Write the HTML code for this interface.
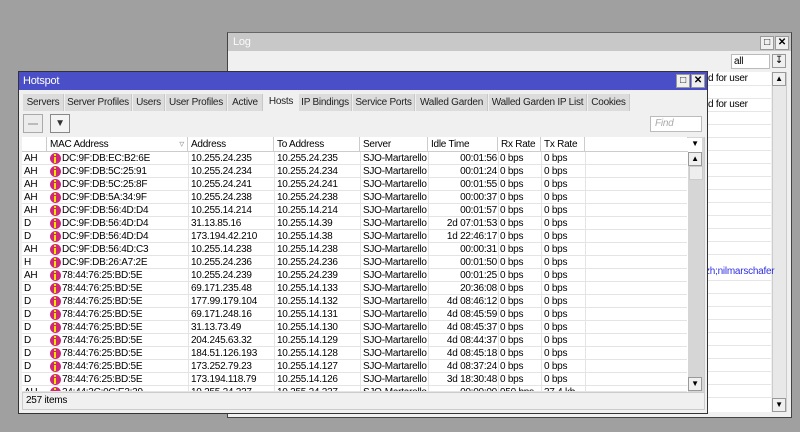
<!DOCTYPE html>
<html><head><meta charset="utf-8"><style>
*{box-sizing:border-box;margin:0;padding:0}
body{width:800px;height:432px;background:#a0a0a0;position:relative;overflow:hidden;font-family:"Liberation Sans",sans-serif;font-size:10px;letter-spacing:-0.25px;color:#000;white-space:nowrap}
.a{position:absolute}
.btn{position:absolute;width:14px;height:14px;border:1px solid #999;background:#f0f0f0;font-size:10px;line-height:12px;text-align:center}
.row{position:absolute;left:22px;width:665px;height:13px;border-bottom:1px solid #e4e4e4;background:#fff;white-space:nowrap}
.row span{position:absolute;top:0;line-height:13px}
.ic{position:absolute;left:28px;top:1px;width:11px;height:11px;border-radius:50%;background:#d02878}
.ic:after{content:"";position:absolute;left:4px;top:4px;width:2px;height:6px;background:#f4e400}
.ic:before{content:"";position:absolute;left:4px;top:1px;width:2px;height:2px;background:#f4e400}
.tab{position:absolute;top:94px;height:17px;background:#dcdcdc;border-right:1px solid #c8c8c8;line-height:17px;text-align:center;color:#222;overflow:hidden}
.hd{position:absolute;top:137px;height:15px;line-height:15px;border-right:1px solid #ccc;padding-left:3px;background:#fff}
.lr{position:absolute;left:707px;width:64px;height:1px;background:#e6e6e6}
</style></head><body>
<div class="a" style="left:227px;top:32px;width:565px;height:386px;background:#f0f0f0;border:1px solid #444;border-top-color:#666"></div>
<div class="a" style="left:228px;top:33px;width:563px;height:18px;background:#c8c8c8;color:#fafafa;padding-left:5px;line-height:18px;font-size:11px">Log</div>
<div class="btn" style="left:760px;top:36px;">&#9633;</div>
<div class="btn" style="left:775px;top:36px;font-weight:bold">✕</div>
<div class="a" style="left:731px;top:54px;width:39px;height:15px;background:#fff;border:1px solid #bbb;padding-left:2px;line-height:13px">all</div>
<div class="btn" style="left:772px;top:54px;">&#8615;</div>
<div class="a" style="left:707px;top:72px;width:64px;height:340px;background:#fff"></div>
<div class="a" style="left:772px;top:72px;width:15px;height:340px;background:#e8e8e8;border:1px solid #ccc"></div>
<div class="btn" style="left:772px;top:72px;font-size:8px">&#9650;</div>
<div class="btn" style="left:772px;top:398px;font-size:8px">&#9660;</div>
<div class="a" style="left:708px;top:72px;line-height:13px">d for user</div>
<div class="a" style="left:708px;top:98px;line-height:13px">d for user</div>
<div class="a" style="left:705px;top:265px;line-height:13px;color:#3030e0">zh;nilmarschafer</div>
<div class="lr" style="top:85px"></div><div class="lr" style="top:98px"></div><div class="lr" style="top:111px"></div><div class="lr" style="top:124px"></div><div class="lr" style="top:137px"></div><div class="lr" style="top:150px"></div><div class="lr" style="top:163px"></div><div class="lr" style="top:176px"></div><div class="lr" style="top:189px"></div><div class="lr" style="top:202px"></div><div class="lr" style="top:215px"></div><div class="lr" style="top:228px"></div><div class="lr" style="top:241px"></div><div class="lr" style="top:254px"></div><div class="lr" style="top:280px"></div><div class="lr" style="top:293px"></div><div class="lr" style="top:306px"></div><div class="lr" style="top:319px"></div><div class="lr" style="top:332px"></div><div class="lr" style="top:345px"></div><div class="lr" style="top:358px"></div><div class="lr" style="top:371px"></div><div class="lr" style="top:384px"></div><div class="lr" style="top:397px"></div>

<div class="a" style="left:18px;top:71px;width:690px;height:343px;background:#f0f0f0;border:1px solid #333"></div>
<div class="a" style="left:19px;top:72px;width:688px;height:18px;background:#4a4fc8;color:#fff;padding-left:4px;line-height:18px;font-size:11px">Hotspot</div>
<div class="btn" style="left:676px;top:74px;">&#9633;</div>
<div class="btn" style="left:691px;top:74px;font-weight:bold">✕</div>
<div class="tab" style="left:23px;width:41px">Servers</div>
<div class="tab" style="left:65px;width:67px">Server Profiles</div>
<div class="tab" style="left:133px;width:32px">Users</div>
<div class="tab" style="left:166px;width:61px">User Profiles</div>
<div class="tab" style="left:228px;width:35px">Active</div>
<div class="tab" style="left:264px;width:34px;top:91px;height:21px;background:#f0f0f0;border:none;line-height:21px">Hosts</div>
<div class="tab" style="left:299px;width:53px">IP Bindings</div>
<div class="tab" style="left:353px;width:62px">Service Ports</div>
<div class="tab" style="left:416px;width:72px">Walled Garden</div>
<div class="tab" style="left:489px;width:98px">Walled Garden IP List</div>
<div class="tab" style="left:588px;width:42px">Cookies</div>
<div class="a" style="left:23px;top:114px;width:20px;height:19px;border:1px solid #aaa;background:#ececec"><div class="a" style="left:4px;top:8px;width:10px;height:2px;background:#bbb"></div></div>
<div class="a" style="left:50px;top:114px;width:20px;height:19px;border:1px solid #888;background:#f4f4f4;text-align:center;line-height:17px;font-weight:bold;color:#333">▼</div>
<div class="a" style="left:650px;top:116px;width:52px;height:16px;background:#fff;border:1px solid #bbb;color:#aaa;padding-left:4px;line-height:14px;font-style:italic">Find</div>
<div class="a" style="left:22px;top:137px;width:683px;height:256px;background:#fff;border:1px solid #ccc"></div>
<div class="hd" style="left:22px;width:25px"></div>
<div class="hd" style="left:47px;width:141px">MAC Address<span style="position:absolute;right:3px;color:#999">▿</span></div>
<div class="hd" style="left:188px;width:86px">Address</div>
<div class="hd" style="left:274px;width:86px">To Address</div>
<div class="hd" style="left:360px;width:68px">Server</div>
<div class="hd" style="left:428px;width:70px">Idle Time</div>
<div class="hd" style="left:498px;width:43px">Rx Rate</div>
<div class="hd" style="left:541px;width:44px">Tx Rate</div>
<div class="hd" style="left:585px;width:102px;border-right:none"></div>
<div class="a" style="left:22px;top:151px;width:683px;height:1px;background:#ccc"></div>
<div class="a" style="left:688px;top:137px;width:16px;height:255px;background:#d6d6d6"></div>
<div class="btn" style="left:688px;top:138px;border:none;background:#fff;font-size:8px">&#9660;</div>
<div class="btn" style="left:688px;top:152px;font-size:8px">&#9650;</div>
<div class="a" style="left:689px;top:166px;width:14px;height:14px;background:#eee;border:1px solid #ccc"></div>
<div class="btn" style="left:688px;top:377px;font-size:8px">&#9660;</div>
<div id="rows"></div>
<div class="a" style="left:22px;top:392px;width:683px;height:18px;border:1px solid #ccc;background:#f0f0f0;padding-left:3px;line-height:16px">257 items</div>
<script>
var d=[["AH","DC:9F:DB:EC:B2:6E","10.255.24.235","10.255.24.235","00:01:56"],["AH","DC:9F:DB:5C:25:91","10.255.24.234","10.255.24.234","00:01:24"],["AH","DC:9F:DB:5C:25:8F","10.255.24.241","10.255.24.241","00:01:55"],["AH","DC:9F:DB:5A:34:9F","10.255.24.238","10.255.24.238","00:00:37"],["AH","DC:9F:DB:56:4D:D4","10.255.14.214","10.255.14.214","00:01:57"],["D","DC:9F:DB:56:4D:D4","31.13.85.16","10.255.14.39","2d 07:01:53"],["D","DC:9F:DB:56:4D:D4","173.194.42.210","10.255.14.38","1d 22:46:17"],["AH","DC:9F:DB:56:4D:C3","10.255.14.238","10.255.14.238","00:00:31"],["H","DC:9F:DB:26:A7:2E","10.255.24.236","10.255.24.236","00:01:50"],["AH","78:44:76:25:BD:5E","10.255.24.239","10.255.24.239","00:01:25"],["D","78:44:76:25:BD:5E","69.171.235.48","10.255.14.133","20:36:08"],["D","78:44:76:25:BD:5E","177.99.179.104","10.255.14.132","4d 08:46:12"],["D","78:44:76:25:BD:5E","69.171.248.16","10.255.14.131","4d 08:45:59"],["D","78:44:76:25:BD:5E","31.13.73.49","10.255.14.130","4d 08:45:37"],["D","78:44:76:25:BD:5E","204.245.63.32","10.255.14.129","4d 08:44:37"],["D","78:44:76:25:BD:5E","184.51.126.193","10.255.14.128","4d 08:45:18"],["D","78:44:76:25:BD:5E","173.252.79.23","10.255.14.127","4d 08:37:24"],["D","78:44:76:25:BD:5E","173.194.118.79","10.255.14.126","3d 18:30:48"],["AH","24:44:3C:0C:E3:39","10.255.24.237","10.255.24.237","00:00:00"]];
var h="";d.forEach(function(r,i){var top=152+i*13;var hh=i==18?(392-top):13;var rx=i==18?"950 bps":"0 bps",tx=i==18?"37.4 kb":"0 bps";
var L=[166,252,338,406,476,519,563],g="";L.forEach(function(x){g+='<i style="position:absolute;left:'+x+'px;top:0;width:1px;height:13px;background:#e4e4e4"></i>';});
h+='<div class="row" style="top:'+top+'px;height:'+hh+'px;overflow:hidden"><span style="left:2px">'+r[0]+'</span><i class="ic"></i><span style="left:40px">'+r[1]+'</span><span style="left:169px">'+r[2]+'</span><span style="left:255px">'+r[3]+'</span><span style="left:341px">SJO-Martarello</span><span style="left:406px;width:69px;text-align:right">'+r[4]+'</span><span style="left:478px">'+rx+'</span><span style="left:522px">'+tx+'</span>'+g+'</div>';});
document.getElementById("rows").innerHTML=h;
</script>
</body></html>
